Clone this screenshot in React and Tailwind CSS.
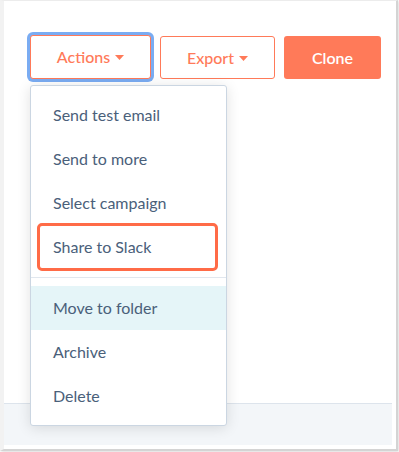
import React from 'react'

const items = ['Send test email', 'Send to more', 'Select campaign', 'Share to Slack']
const items2 = ['Move to folder', 'Archive', 'Delete']

function Caret({ color = '#ff7a59' }) {
  return (
    <svg width="9" height="5" viewBox="0 0 9 5" className="ml-[5px] mt-[1px]">
      <path d="M0 0 L9 0 L4.5 5 Z" fill={color} />
    </svg>
  )
}

function App() {
  return (
    <div className="w-[399px] h-[452px] bg-white font-['Lato','Liberation_Sans',sans-serif]">
      <div className="w-[398px] h-[451px] flex flex-col border-l-[4px] border-l-[#f2f2f2] border-t border-t-[#ececec] border-r-2 border-r-[#d4d4d4] border-b-2 border-b-[#d4d4d4] shadow-[1px_1px_3px_rgba(0,0,0,0.15)]">
        <div className="relative flex-1">
          <div className="flex items-start gap-[9px] pl-[26px] pt-[34px]">
            <div className="relative">
              <button className="w-[121px] h-[44px] flex items-center justify-center rounded-[3px] border border-[#ff7a59] bg-white text-[16px] font-medium text-[#ff7a59] shadow-[0_0_0_3px_#7aacf2]">
                Actions
                <Caret />
              </button>
              <div className="absolute left-0 top-[50px] w-[197px] rounded-[3px] border border-[#cbd6e2] bg-white py-[7px] shadow-[0_2px_14px_rgba(0,0,0,0.12)] text-[16px] text-[#4a607a]">
                {items.map((t) => (
                  <div key={t} className="relative h-[44px] flex items-center pl-[22px]">
                    {t}
                    {t === 'Share to Slack' && (
                      <div className="absolute left-[6px] right-[8px] top-[-2px] bottom-[-2px] rounded-[5px] border-[3px] border-[#ff6b47]" />
                    )}
                  </div>
                ))}
                <div className="mt-[8px] mb-[8px] h-px bg-[#e1e7ee]" />
                {items2.map((t, i) => (
                  <div key={t} className={`h-[44px] flex items-center pl-[22px] ${i === 0 ? 'bg-[#e5f5f8]' : ''}`}>
                    {t}
                  </div>
                ))}
              </div>
            </div>
            <button className="mt-[1px] w-[115px] h-[43px] flex items-center justify-center rounded-[3px] border border-[#ff7a59] bg-white text-[16px] font-medium text-[#ff7a59]">
              Export
              <Caret />
            </button>
            <button className="mt-[1px] w-[97px] h-[43px] flex items-center justify-center rounded-[3px] bg-[#ff7a59] text-[16px] font-semibold text-white">
              Clone
            </button>
          </div>
        </div>
        <div className="h-[42px] mr-[4px] mb-[4px] border-t border-t-[#dde4ec] bg-[#f3f6f9]" />
      </div>
    </div>
  )
}

export default App
